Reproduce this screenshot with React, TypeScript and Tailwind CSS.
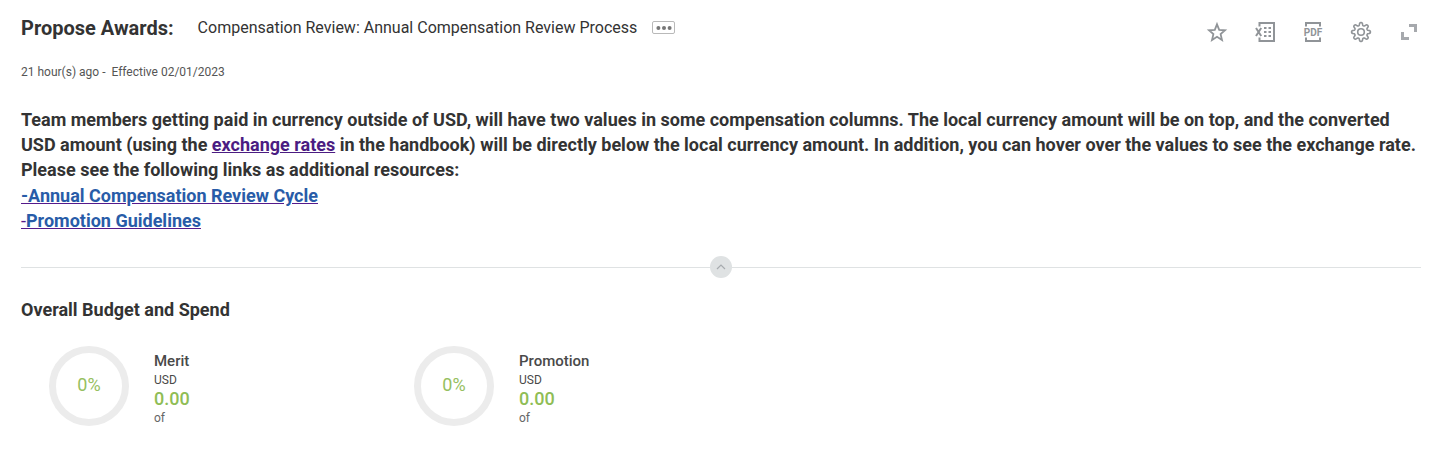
import React from 'react';

// Outline of a cog with eight rounded teeth, centred in a 24-unit box.
const cogPath =
  Array.from({ length: 160 }, (_, i) => {
    const angle = (i / 160) * Math.PI * 2;
    const radius = 8 + 1.45 * Math.tanh(1.9 * Math.cos(8 * angle));
    const x = (12 + radius * Math.sin(angle)).toFixed(2);
    const y = (12 - radius * Math.cos(angle)).toFixed(2);
    return `${i === 0 ? 'M' : 'L'}${x} ${y}`;
  }).join('') + 'Z';

const actions = [
  {
    name: 'Favorite',
    icon: (
      <path d="M12 4.3 14.2 9.9 20 10.3 15.6 14.1 17 20 12 16.8 7 20 8.4 14.1 4 10.3 9.8 9.9Z" fill="none" stroke="currentColor" strokeWidth="1.8" />
    ),
  },
  {
    name: 'Export to Excel',
    icon: (
      <g fill="none" stroke="currentColor">
        <path d="M6.5 6.5V3H21V21H6.5V17.5" strokeWidth="2" />
        <path d="M3 8 8.2 16M8.2 8 3 16" strokeWidth="2" />
        <path d="M11 8H13.5M15.5 8H18M11 12H13.5M15.5 12H18M11 16H13.5M15.5 16H18" strokeWidth="2" />
      </g>
    ),
  },
  {
    name: 'Export to PDF',
    icon: (
      <>
        <path d="M5 6.5V3H19V6.5M5 17.5V21H19V17.5" fill="none" stroke="currentColor" strokeWidth="2" />
        <text x="12" y="15.8" textAnchor="middle" fontSize="10" fontWeight="700" fill="currentColor" textLength="18.6">PDF</text>
      </>
    ),
  },
  {
    name: 'Settings',
    icon: (
      <g fill="none" stroke="currentColor" strokeWidth="1.6" strokeLinejoin="round">
        <path d={cogPath} />
        <circle cx="12" cy="12" r="3.3" />
      </g>
    ),
  },
  {
    name: 'Expand',
    icon: <path d="M12 4H20V12H17V7H12ZM4 12H7V17H12V20H4Z" fill="currentColor" opacity="0.8" />,
  },
];

function Budget({ title }: { title: string }) {
  return (
    <div className="flex w-[365px]">
      <div className="flex size-20 items-center justify-center rounded-full border-[7px] border-[#ececec] pb-[3px] text-[18px] text-[#96c060]">0%</div>
      <div className="ml-[25px] pt-[5px] text-[12px] leading-[18px] text-[#494949]">
        <h3 className="text-[15px] leading-5 font-medium">{title}</h3>
        <p>USD</p>
        <p className="text-[18px] leading-5 font-medium text-[#8fbd55]">0.00</p>
        <p className="text-[#666]">of</p>
      </div>
    </div>
  );
}

export default function App() {
  return (
    <main className="h-[468px] w-full overflow-hidden bg-white pr-[31px] pl-[21px] font-['Roboto',sans-serif] text-[#333]">
      <header className="flex h-14 items-start">
        <h1 className="pt-[14px] text-[20px] leading-7 font-bold whitespace-nowrap">Propose Awards:</h1>
        <p className="ml-6 pt-[14px] text-[16px] leading-7 whitespace-nowrap">Compensation Review: Annual Compensation Review Process</p>
        <button aria-label="More" className="mt-[21px] ml-[15px] flex h-[13px] w-[23px] items-center justify-center rounded-[2px] border border-[#b9b9b9]">
          <svg viewBox="0 0 16 4" className="h-1 w-4" fill="#777">
            <circle cx="2.4" cy="2" r="2" />
            <circle cx="8" cy="2" r="2" />
            <circle cx="13.6" cy="2" r="2" />
          </svg>
        </button>
        <nav className="mt-5 ml-auto flex gap-6 text-[#909498]">
          {actions.map(({ name, icon }) => (
            <button key={name} aria-label={name} className="size-6">
              <svg viewBox="0 0 24 24" className="size-6 overflow-visible">{icon}</svg>
            </button>
          ))}
        </nav>
      </header>
      <p className="mt-[7px] text-[12px] leading-[18px] whitespace-pre text-[#555]">{'21 hour(s) ago -  Effective 02/01/2023'}</p>
      <div className="mt-[26px] text-[18px] leading-[25.2px] font-bold whitespace-nowrap">
        <p>Team members getting paid in currency outside of USD, will have two values in some compensation columns. The local currency amount will be on top, and the converted</p>
        <p>USD amount (using the <a href="#rates" className="text-[#4b1c82] underline">exchange rates</a> in the handbook) will be directly below the local currency amount. In addition, you can hover over the values to see the exchange rate.</p>
        <p>Please see the following links as additional resources:</p>
        <p><a href="#cycle" className="text-[#285ca8] underline decoration-[#551a8b]">-Annual Compensation Review Cycle</a></p>
        <p><a href="#promotion" className="text-[#285ca8] underline decoration-[#551a8b]"><span className="font-normal text-[#551a8b]">-</span>Promotion Guidelines</a></p>
      </div>
      <div className="mt-[23px] flex h-[22px] w-[1400px] items-center">
        <span className="h-px flex-1 bg-[#dfe2e3]" />
        <button aria-label="Collapse" className="flex size-[22px] items-center justify-center rounded-full bg-[#dfe2e3]">
          <svg viewBox="0 0 10 6" className="h-[6px] w-[10px]"><path d="M1 5 5 1 9 5" fill="none" stroke="#a7abaf" strokeWidth="1.2" /></svg>
        </button>
        <span className="h-px flex-1 bg-[#dfe2e3]" />
      </div>
      <h2 className="mt-5 text-[18px] leading-6 font-bold">Overall Budget and Spend</h2>
      <section className="mt-6 ml-7 flex">
        <Budget title="Merit" />
        <Budget title="Promotion" />
      </section>
    </main>
  );
}
